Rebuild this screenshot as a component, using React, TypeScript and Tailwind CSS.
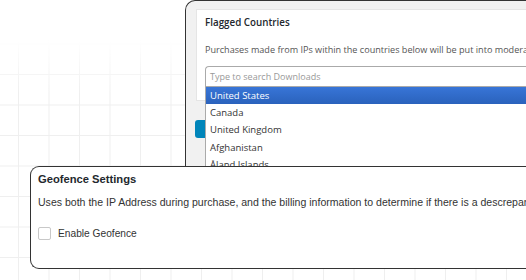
const countries = ['United States', 'Canada', 'United Kingdom', 'Afghanistan', 'Åland Islands', 'Albania'];

function FlaggedCountriesWindow() {
  return (
    <div className="ml-[185px] h-[166px] w-[420px] shrink-0 rounded-tl-[10px] border-l-[1.5px] border-t-[1.5px] border-[#333] bg-[#f1f1f1] pl-[10px] pt-[8px] font-['Open_Sans',sans-serif]">
      <div className="border border-r-0 border-[#e5e5e5] bg-white pl-[8px] pt-[6px] pb-[13px]">
        <h3 className="text-[9.8px] font-semibold leading-[14px] text-[#23282d]">Flagged Countries</h3>
        <p className="mt-[13px] whitespace-nowrap text-[9.1px] leading-[14px] text-[#555]">
          Purchases made from IPs within the countries below will be put into moderation.
        </p>
        <div className="relative mt-[9px]">
          <div className="flex h-[21px] items-center rounded-tl-[4px] border border-r-0 border-[#aaa] bg-white px-[4px] text-[9px] text-[#999]">
            Type to search Downloads
          </div>
          <ul className="absolute left-0 right-0 top-[21px] z-10 h-[90px] overflow-hidden border-l border-[#aaa] bg-white text-[9.5px] text-[#333]">
            {countries.map((c, i) => (
              <li
                key={c}
                className={
                  i === 0
                    ? 'flex h-[17.4px] items-center bg-[linear-gradient(#3875d7,#2a62bc)] px-[4px] text-white'
                    : 'flex h-[17.4px] items-center px-[4px]'
                }
              >
                {c}
              </li>
            ))}
          </ul>
        </div>
      </div>
      <button className="-ml-px mt-[19px] h-[18px] w-[60px] rounded-[3px] bg-[#0085ba]" />
    </div>
  );
}

function GeofenceWindow() {
  return (
    <div className="z-20 ml-[30px] h-[103px] w-[560px] shrink-0 rounded-l-[9px] border-[1.5px] border-r-0 border-[#333] bg-white pl-[7px] pt-[5px] font-['Liberation_Sans',Arial,sans-serif] text-[#333]">
      <h3 className="text-[11.2px] font-bold leading-[14px] text-[#23282d]">Geofence Settings</h3>
      <p className="mt-[9px] whitespace-nowrap text-[10.55px] leading-[14px]">
        Uses both the IP Address during purchase, and the billing information to determine if there is a descrepancy.
      </p>
      <label className="mt-[17px] flex items-center gap-[7px] text-[10.2px]">
        <span className="h-[13px] w-[13px] rounded-[2px] border border-[#c8c8c8] bg-white" />
        Enable Geofence
      </label>
    </div>
  );
}

export default function App() {
  return (
    <div className="flex h-[280px] w-[526px] flex-col overflow-hidden bg-white bg-[linear-gradient(to_bottom,#fff_40px,rgba(255,255,255,0)_95px),linear-gradient(to_right,#efefef_1px,transparent_1px),linear-gradient(to_bottom,#efefef_1px,transparent_1px)] bg-[size:100%_100%,30.5px_30.5px,30.5px_30.5px] bg-[position:0_0,18px_13px,18px_13px]">
      <FlaggedCountriesWindow />
      <GeofenceWindow />
    </div>
  );
}
